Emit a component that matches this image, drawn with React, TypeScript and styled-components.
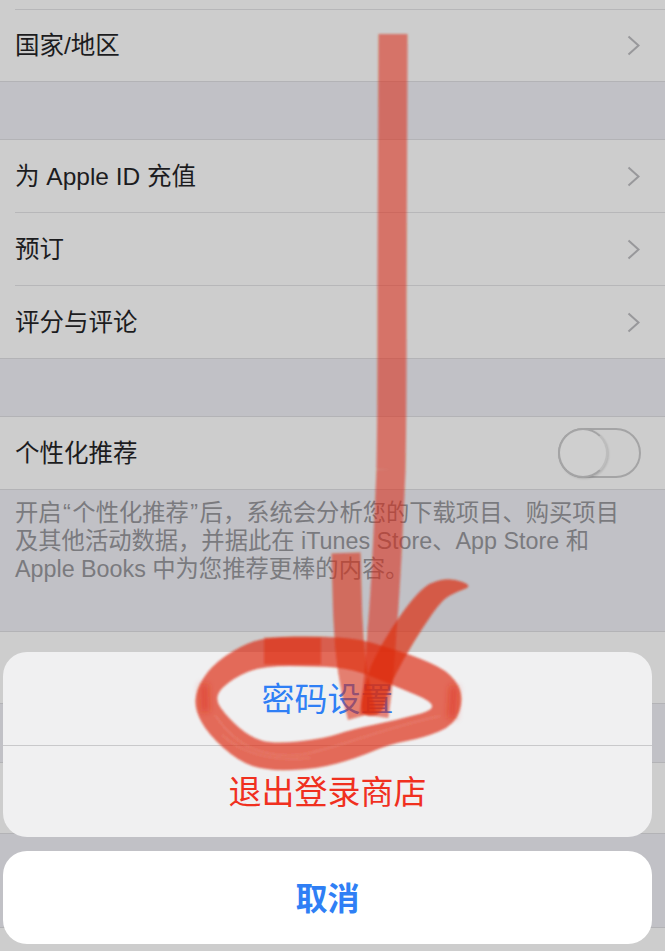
import React from 'react';
import styled, { createGlobalStyle } from 'styled-components';

const GlobalStyle = createGlobalStyle`
  html, body {
    margin: 0;
    padding: 0;
    background: #fff;
  }
  body {
    font-family: "Liberation Sans", "Noto Sans CJK SC", sans-serif;
  }
`;

const Screen = styled.div`
  position: relative;
  width: 665px;
  height: 951px;
  overflow: hidden;
  background: #c1c1c6;
`;

const Group = styled.section<{ $noTop?: boolean; $noBottom?: boolean }>`
  background: #cdcdcd;
  border-top: ${p => (p.$noTop ? 'none' : '1px solid #b3b3b6')};
  border-bottom: ${p => (p.$noBottom ? 'none' : '1px solid #b3b3b6')};
  padding-left: 15px;
`;

const Row = styled.div<{ $height: number; $divider?: boolean }>`
  box-sizing: border-box;
  height: ${p => p.$height}px;
  display: flex;
  align-items: center;
  justify-content: space-between;
  padding-right: 25px;
  border-bottom: ${p => (p.$divider ? '1px solid #b7b7b9' : 'none')};
`;

const RowLabel = styled.span`
  font-size: 24.5px;
  color: #1c1c1e;
  white-space: nowrap;
  padding-bottom: 4px;
`;

const Gap = styled.div<{ $height: number }>`
  height: ${p => p.$height}px;
`;

const Toggle = styled.div`
  position: relative;
  box-sizing: border-box;
  width: 83px;
  height: 50px;
  margin-right: -1px;
  border: 2px solid #a4a4a5;
  border-radius: 25px;

  &::before {
    content: "";
    position: absolute;
    left: -2px;
    top: -2px;
    box-sizing: border-box;
    width: 50px;
    height: 50px;
    border-radius: 50%;
    border: 2px solid #a4a4a5;
    border-right-color: #bdbdbd;
    background: #cfcfcf;
    box-shadow: 1px 1px 2px rgba(0, 0, 0, 0.12);
  }
`;

const Footnote = styled.p`
  box-sizing: border-box;
  height: 141px;
  margin: 0;
  padding: 9px 0 0 15px;
  font-size: 23.3px;
  line-height: 28px;
  color: #7a7a7e;
  white-space: nowrap;
`;

const Quote = styled.span`
  padding: 0 1.5px;
`;

const SheetStack = styled.div`
  position: absolute;
  left: 3px;
  top: 652px;
  width: 649px;
  display: flex;
  flex-direction: column;
  gap: 14px;
`;

const SheetCard = styled.div`
  display: flex;
  flex-direction: column;
  border-radius: 24px;
  overflow: hidden;
  background: #f0f0f1;
`;

const SheetButton = styled.div<{ $color: string; $height: number; $divider?: boolean }>`
  box-sizing: border-box;
  height: ${p => p.$height}px;
  display: flex;
  align-items: center;
  justify-content: center;
  padding-bottom: 3px;
  font-size: 33px;
  color: ${p => p.$color};
  border-bottom: ${p => (p.$divider ? '1px solid #c9c9cb' : 'none')};
`;

const CancelButton = styled.div`
  box-sizing: border-box;
  height: 93px;
  display: flex;
  align-items: center;
  justify-content: center;
  padding-bottom: 4px;
  border-radius: 24px;
  background: #fff;
  font-size: 32px;
  font-weight: 600;
  color: #2f7ff5;
`;

const Scribble = styled.svg`
  position: absolute;
  left: 0;
  top: 0;
  pointer-events: none;
`;

function Chevron() {
  return (
    <svg width="13" height="21" viewBox="0 0 13 21" fill="none">
      <path d="M1.5 1.5 L11.5 10.5 L1.5 19.5" stroke="#98989b" strokeWidth="2" />
    </svg>
  );
}

type Pt = [number, number];

// closed curve running through the midpoints of a hand-traced outline
function blob(pts: Pt[]) {
  const mid = (a: Pt, b: Pt) => `${(a[0] + b[0]) / 2} ${(a[1] + b[1]) / 2}`;
  let d = `M${mid(pts[pts.length - 1], pts[0])}`;
  pts.forEach((p, i) => {
    d += ` Q${p[0]} ${p[1]} ${mid(p, pts[(i + 1) % pts.length])}`;
  });
  return d + ' Z';
}

const INK = '#dd2c10';

const lassoOuter: Pt[] = [
  [267, 637], [320, 636], [357, 639], [377, 644], [423, 659], [452, 674], [464, 697], [455, 725],
  [423, 738], [390, 744], [357, 758], [317, 769], [267, 771], [238, 761], [208, 734], [195, 710],
  [196, 690], [211, 666], [240, 646],
];
const lassoInner: Pt[] = [
  [213, 697], [233, 678], [262, 666], [317, 666], [353, 669], [390, 684], [445, 707], [397, 720],
  [353, 729], [323, 739], [273, 744], [250, 737], [228, 718],
];
const arrowRight: Pt[] = [
  [473, 586], [456, 592], [442, 600], [423, 627], [403, 660], [388, 690], [382, 716], [358, 716],
  [367, 677], [373, 660], [392, 627], [413, 598], [430, 582], [452, 578],
];

export default function App() {
  return (
    <Screen>
      <GlobalStyle />

      <Group $noTop>
        <Row $height={10} $divider />
        <Row $height={71}>
          <RowLabel>国家/地区</RowLabel>
          <Chevron />
        </Row>
      </Group>

      <Gap $height={57} />

      <Group>
        <Row $height={73} $divider>
          <RowLabel>为 Apple ID 充值</RowLabel>
          <Chevron />
        </Row>
        <Row $height={73} $divider>
          <RowLabel>预订</RowLabel>
          <Chevron />
        </Row>
        <Row $height={72}>
          <RowLabel>评分与评论</RowLabel>
          <Chevron />
        </Row>
      </Group>

      <Gap $height={57} />

      <Group>
        <Row $height={72}>
          <RowLabel>个性化推荐</RowLabel>
          <Toggle />
        </Row>
      </Group>

      <Footnote>
        开启<Quote>“</Quote>个性化推荐<Quote>”</Quote>后，系统会分析您的下载项目、购买项目
        <br />
        及其他活动数据，并据此在 iTunes Store、App Store 和
        <br />
        Apple Books 中为您推荐更棒的内容。
      </Footnote>

      <Group>
        <Row $height={71} />
      </Group>
      <Gap $height={58} />
      <Group>
        <Row $height={70} />
      </Group>
      <Gap $height={93} />
      <Group $noBottom>
        <Row $height={24} />
      </Group>

      <SheetStack>
        <SheetCard>
          <SheetButton $color="#2f7ff5" $height={94} $divider>密码设置</SheetButton>
          <SheetButton $color="#f0301f" $height={91}>退出登录商店</SheetButton>
        </SheetCard>
        <CancelButton>取消</CancelButton>
      </SheetStack>

      <Scribble width="665" height="951" viewBox="0 0 665 951" fill="none">
        <defs>
          <filter id="soft" x="-10%" y="-10%" width="120%" height="120%">
            <feGaussianBlur stdDeviation="1.2" />
          </filter>
          <filter id="softer" x="-40%" y="-40%" width="180%" height="180%">
            <feGaussianBlur stdDeviation="3" />
          </filter>
        </defs>
        <g filter="url(#soft)">
          {/* long shaft */}
          <path
            d="M393 34 C393 130 392 220 392 300 C392 380 392 420 391 470 C388 540 385 600 382 630 C380 670 377 695 374 716"
            stroke={INK}
            strokeWidth="29"
            strokeOpacity="0.55"
          />
          {/* left barb */}
          <path
            d="M346 553 C347 580 347 600 348 620 C349 650 352 680 362 716"
            stroke={INK}
            strokeWidth="29"
            strokeOpacity="0.58"
          />
          {/* right barb */}
          <path d={blob(arrowRight)} fill={INK} fillOpacity="0.7" />
          {/* circle round the button */}
          <path d={blob(lassoOuter) + ' ' + blob(lassoInner)} fill={INK} fillOpacity="0.68" fillRule="evenodd" />
          <path d="M264 651 L321 651" stroke={INK} strokeWidth="27" strokeOpacity="0.5" />
          {/* brush streaks */}
          <path d="M215 715 C235 745 260 758 300 755 C340 748 375 730 440 716" stroke="#fff" strokeWidth="2" strokeOpacity="0.08" />
          <path d="M222 735 C240 752 270 762 310 758" stroke="#fff" strokeWidth="2" strokeOpacity="0.08" />
        </g>
        {/* ends of the circle stroke overlap at the two sides */}
        <g filter="url(#softer)" stroke={INK} strokeOpacity="0.45">
          <path d="M204 684 L205 712" strokeWidth="9" />
          <path d="M454 686 L452 718" strokeWidth="9" />
        </g>
      </Scribble>
    </Screen>
  );
}
